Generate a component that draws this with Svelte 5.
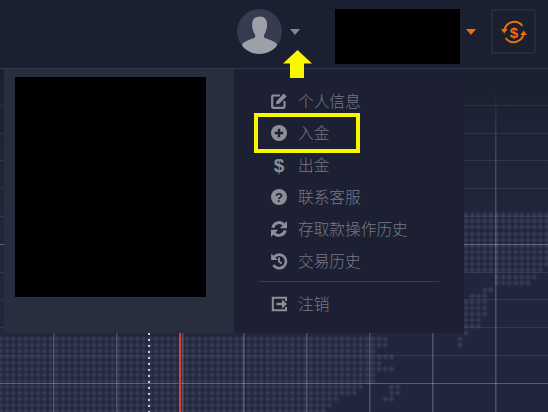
<script>
  // Horizontal spans of the dotted world map behind the chart: [y, fromX, toX]
  const PITCH = 6.2;

  const mapSpans = [
    [209, 467, 470],
    [215, 464, 548], [221, 464, 548], [227, 464, 548], [234, 464, 548], [240, 464, 548],
    [246, 464, 548], [252, 464, 548], [258, 464, 548], [264, 464, 548], [270, 464, 540],
    [277, 490, 534], [283, 495, 528],
    [290, 478, 490], [296, 470, 485], [302, 464, 484], [308, 464, 484], [314, 464, 485],
    [320, 464, 480], [326, 464, 478], [333, 464, 468],
    [339, 0, 390], [339, 455, 462],
    [345, 0, 390], [345, 456, 461],
    [351, 0, 378], [351, 454, 458],
    [357, 0, 396], [363, 0, 384], [369, 0, 392], [375, 0, 374],
    [381, 0, 372], [387, 0, 360], [387, 388, 400],
    [393, 0, 356], [393, 386, 402], [399, 0, 340], [399, 382, 392],
    [405, 0, 332], [411, 0, 328]
  ];

  const dots = [];
  for (const [y, from, to] of mapSpans) {
    const start = Math.ceil(from / PITCH);
    for (let i = start; i * PITCH <= to; i++) {
      dots.push({ x: i * PITCH + 1, y });
    }
  }

  const gridX = [53, 116, 182, 243, 306, 369, 432, 495];
  const faintY = [105, 133, 160, 188, 216, 272, 299, 327, 355];
  const strongY = [244, 383];

  const menu = [
    { id: 'profile', label: '个人信息' },
    { id: 'deposit', label: '入金', marked: true },
    { id: 'withdraw', label: '出金' },
    { id: 'support', label: '联系客服' },
    { id: 'transfers', label: '存取款操作历史' },
    { id: 'trades', label: '交易历史' }
  ];
</script>

{#snippet icon(id)}
  <svg class="icon" viewBox="0 0 16 16" width="16" height="16">
    {#if id === 'profile'}
      <path d="M9 2.500H2.200a1 1 0 0 0-1 1v10.300a1 1 0 0 0 1 1H12.500a1 1 0 0 0 1-1V8" fill="none" stroke="currentColor" stroke-width="2.200"/>
      <path d="M5.500 8.200 12.600.6l3 2.800-7.400 7.400-3.200.5z" fill="currentColor"/>
    {:else if id === 'deposit'}
      <circle cx="8" cy="8" r="8" fill="currentColor"/>
      <path d="M8 3.800v8.400M3.800 8h8.400" stroke="#1d2032" stroke-width="2.400"/>
    {:else if id === 'withdraw'}
      <text class="dollar" x="8" y="14.500" text-anchor="middle">$</text>
    {:else if id === 'support'}
      <circle cx="8" cy="8" r="8" fill="currentColor"/>
      <text class="question" x="8" y="12.600" text-anchor="middle">?</text>
    {:else if id === 'transfers'}
      <path d="M1.800 6.800A6.500 6.500 0 0 1 13 3.800M14.200 9.200A6.500 6.500 0 0 1 3 12.200" fill="none" stroke="currentColor" stroke-width="3"/>
      <path d="M16 0v7.200H8.800zM0 16V8.800h7.200z" fill="currentColor"/>
    {:else if id === 'trades'}
      <path d="M3.200 3.800A6.800 6.800 0 1 1 2.400 12" fill="none" stroke="currentColor" stroke-width="2.600"/>
      <path d="M0.200 .6 6.800 7H.2z" fill="currentColor"/>
      <path d="M8 4.400v4.200l2.800 2" fill="none" stroke="currentColor" stroke-width="1.900"/>
    {:else if id === 'logout'}
      <path d="M15 5V1.800H1.800v12.400H15V11" fill="none" stroke="currentColor" stroke-width="2"/>
      <path d="M5.500 6.800h5.500V3.600L16 8l-5 4.400V9.200H5.500z" fill="currentColor"/>
    {/if}
  </svg>
{/snippet}

<div class="page">
  <svg class="chart" width="548" height="412" aria-hidden="true">
    <defs>
      <linearGradient id="shade" x1="0" y1="0" x2="0" y2="1">
        <stop offset="0" stop-color="#1b2030"/>
        <stop offset="1" stop-color="#21263c"/>
      </linearGradient>
      <linearGradient id="fade" gradientUnits="userSpaceOnUse" x1="0" y1="90" x2="0" y2="240">
        <stop offset="0" stop-color="#fff" stop-opacity="0"/>
        <stop offset="0.4" stop-color="#fff" stop-opacity="0.16"/>
        <stop offset="1" stop-color="#fff" stop-opacity="0.2"/>
      </linearGradient>
      <filter id="soft" x="-5%" y="-5%" width="110%" height="110%">
        <feGaussianBlur stdDeviation="0.9"/>
      </filter>
    </defs>
    <rect width="548" height="412" fill="#21263c"/>
    <rect y="69" width="548" height="150" fill="url(#shade)"/>
    <g filter="url(#soft)" fill="#414760">
      {#each dots as d}
        <circle cx={d.x} cy={d.y} r="2"/>
      {/each}
    </g>
    {#each faintY as y}
      <rect {y} width="548" height="1" fill="#fff" opacity="0.08"/>
    {/each}
    {#each strongY as y}
      <rect {y} width="548" height="1" fill="#fff" opacity="0.26"/>
    {/each}
    {#each gridX as x}
      <rect {x} y="69" width="1.500" height="343" fill="url(#fade)"/>
    {/each}
    <line x1="149" y1="333" x2="149" y2="412" stroke="#fff" stroke-width="1.500" stroke-dasharray="2 4"/>
    <rect x="179" y="333" width="2" height="79" fill="#d5452c"/>
  </svg>

  <header class="topbar">
    <div class="user">
      <svg class="avatar" viewBox="0 0 45 45" width="45" height="45">
        <defs>
          <clipPath id="round"><circle cx="22.500" cy="22.500" r="22.500"/></clipPath>
        </defs>
        <g clip-path="url(#round)">
          <rect width="45" height="45" fill="#363c50"/>
          <path d="M22.500 7.500c4.600 0 7.600 2.600 7.600 8 0 4.600-1.400 7.600-2.800 10-.8 1.400-.4 3 1.400 3.800 4 1.700 9.300 3 11.300 6.200 1 1.600 1.200 4 1.200 9.500H4c0-5.500.2-7.900 1.200-9.500 2-3.200 7.300-4.500 11.300-6.200 1.800-.8 2.200-2.400 1.400-3.800-1.400-2.400-2.800-5.400-2.800-10 0-5.400 3-8 8.400-8z" fill="#9d9fa9"/>
        </g>
      </svg>
      <span class="caret grey"></span>
    </div>
    <div class="balance"></div>
    <span class="caret orange"></span>
    <button class="exchange" aria-label="exchange">
      <svg viewBox="0 0 30 30" width="30" height="30">
        <path d="M5.600 12.400A10 10 0 0 1 23.400 9M24.400 17.600A10 10 0 0 1 6.600 21" fill="none" stroke="#ee6f0c" stroke-width="1.900"/>
        <path d="M2 12h6.600L5.300 16.400zM28 18h-6.600l3.300-4.400z" fill="#ee6f0c"/>
        <text class="exchange-sign" x="15" y="20.500" text-anchor="middle">$</text>
      </svg>
    </button>
  </header>

  <div class="dropdown">
    <div class="account">
      <div class="photo"></div>
    </div>
    <nav class="menu">
      {#each menu as item}
        <div class="row">
          {@render icon(item.id)}
          <span>{item.label}</span>
          {#if item.marked}<div class="marker"></div>{/if}
        </div>
      {/each}
      <hr />
      <div class="row">
        {@render icon('logout')}
        <span>注销</span>
      </div>
    </nav>
  </div>

  <svg class="arrow" width="30" height="29" viewBox="0 0 30 29" aria-hidden="true">
    <path d="M14.500 0 29 13.500h-8V28H7V13.500H0z" fill="#f7f700"/>
  </svg>
</div>

<style>
  :global(body) {
    margin: 0;
    background: #21263c;
  }

  .page {
    position: relative;
    width: 548px;
    height: 412px;
    overflow: hidden;
    font-family: "Noto Sans CJK SC", "Liberation Sans", sans-serif;
  }

  .chart {
    position: absolute;
    inset: 0;
  }

  .topbar {
    position: relative;
    box-sizing: border-box;
    height: 69px;
    padding: 9px 11px 0 237px;
    display: flex;
    align-items: flex-start;
    background: #1a2030;
    border-bottom: 1px solid #343848;
  }

  .user {
    display: flex;
    align-items: center;
    gap: 8px;
    width: 98px;
  }

  .avatar {
    display: block;
  }

  .caret {
    width: 0;
    height: 0;
    border-left: 5.500px solid transparent;
    border-right: 5.500px solid transparent;
    border-top: 6px solid #85878f;
  }

  .caret.orange {
    border-top-color: #ee6f0c;
    margin: 20px 15px 0 6px;
  }

  .balance {
    width: 125px;
    height: 55px;
    background: #000;
  }

  .exchange {
    box-sizing: border-box;
    width: 45px;
    height: 45px;
    padding: 0;
    display: flex;
    align-items: center;
    justify-content: center;
    background: transparent;
    border: 2px solid #272c3b;
    border-radius: 3px;
  }

  .exchange-sign {
    font: 700 15px "Liberation Sans", sans-serif;
    fill: #ee6f0c;
  }

  .dropdown {
    position: absolute;
    top: 69px;
    left: 4px;
    width: 460px;
    height: 264px;
    display: flex;
  }

  .account {
    box-sizing: border-box;
    width: 230px;
    padding: 8px 0 0 11px;
    background: #292e3f;
  }

  .photo {
    width: 191px;
    height: 220px;
    background: #000;
  }

  .menu {
    box-sizing: border-box;
    width: 230px;
    padding: 16px 25px 0 37px;
    background: #1d2032;
    color: #777a85;
    font-size: 15.700px;
    font-weight: 300;
  }

  .row {
    position: relative;
    height: 32px;
    display: flex;
    align-items: center;
    gap: 11px;
  }

  .row span {
    padding-bottom: 2px;
  }

  .icon {
    flex: none;
    color: #8d8f98;
    overflow: visible;
  }

  .dollar {
    font: 700 19px "Liberation Sans", sans-serif;
    fill: #8d8f98;
  }

  .question {
    font: 700 13px "Liberation Sans", sans-serif;
    fill: #1d2032;
  }

  .marker {
    position: absolute;
    box-sizing: border-box;
    left: -17px;
    top: -4px;
    width: 106px;
    height: 40px;
    border: 4px solid #f7f700;
  }

  hr {
    margin: 4px 0 6px -12px;
    height: 1px;
    border: 0;
    background: #3a3d4d;
  }

  .arrow {
    position: absolute;
    left: 283px;
    top: 50px;
  }
</style>
